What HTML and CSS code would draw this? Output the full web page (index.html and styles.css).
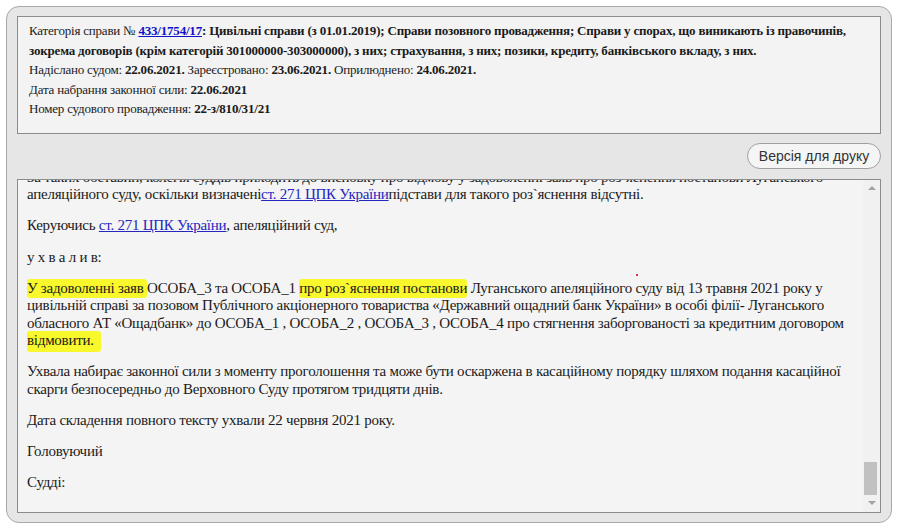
FILE: index.html
```html
<!DOCTYPE html>
<html lang="uk">
<head>
<meta charset="utf-8">
<title>Ухвала</title>
<link rel="stylesheet" href="styles.css">
</head>
<body>
<div class="frame">
  <div class="info">
    <div class="info-line">Категорія справи № <a class="case-link" href="#">433/1754/17</a><b>: Цивільні справи (з 01.01.2019); Справи позовного провадження; Справи у спорах, що виникають із правочинів, зокрема договорів (крім категорій 301000000-303000000), з них; страхування, з них; позики, кредиту, банківського вкладу, з них.</b></div>
    <div class="info-line">Надіслано судом: <b>22.06.2021.</b> Зареєстровано: <b>23.06.2021.</b> Оприлюднено: <b>24.06.2021.</b></div>
    <div class="info-line">Дата набрання законної сили: <b>22.06.2021</b></div>
    <div class="info-line">Номер судового провадження: <b>22-з/810/31/21</b></div>
  </div>
  <div class="toolbar">
    <button class="print-btn" type="button">Версія для друку</button>
  </div>
  <div class="doc-wrap">
    <div class="doc">
      <div class="doc-body">
        <p class="center">Справа № 433/1754/17</p>
        <p class="center">Провадження № 22-з/810/31/21</p>
        <p class="center"><b>ЛУГАНСЬКИЙ АПЕЛЯЦІЙНИЙ СУД</b></p>
        <p class="center"><b>УХВАЛА</b></p>
        <p class="center"><b>ІМЕНЕМ УКРАЇНИ</b></p>
        <p>22 червня 2021 року м. Сєвєродонецьк</p>
        <p>Луганський апеляційний суд у складі:</p>
        <p>головуючого судді - ОСОБА_5,</p>
        <p>суддів: ОСОБА_6, ОСОБА_7,</p>
        <p>розглянувши у порядку письмового провадження заяву ОСОБА_3 та ОСОБА_1 про роз`яснення постанови Луганського апеляційного суду від 13 травня 2021 року у цивільній справі за позовом Публічного акціонерного товариства «Державний ощадний банк України» в особі філії- Луганського обласного АТ «Ощадбанк» до ОСОБА_1 , ОСОБА_2 , ОСОБА_3 , ОСОБА_4 про стягнення заборгованості за кредитним договором,</p>
        <p class="center">в с т а н о в и в :</p>
        <p>Постановою Луганського апеляційного суду від 13 травня 2021 року апеляційну скаргу ОСОБА_1 задоволено частково. Рішення Лисичанського міського суду Луганської області від 21 грудня 2020 року змінено в частині розміру заборгованості, що підлягає стягненню, в іншій частині рішення суду залишено без змін.</p>
        <p>17 червня 2021 року до Луганського апеляційного суду надійшли заяви ОСОБА_3 та ОСОБА_1 про роз`яснення зазначеної постанови, в яких заявники просять роз`яснити порядок її виконання та розмір заборгованості, що підлягає стягненню з кожного з відповідачів.</p>
        <p>Відповідно до частини першої статті 271 ЦПК України за заявою учасників справи, державного виконавця, приватного виконавця суд роз`яснює судове рішення, яке набрало законної сили, не змінюючи змісту судового рішення.</p>
        <p>Подання заяви про роз`яснення судового рішення допускається, якщо воно ще не виконане або не закінчився строк, протягом якого рішення може бути пред`явлене до примусового виконання.</p>
        <p>Роз`яснення судового рішення - це викладення судового рішення у більш повній і зрозумілій формі. Роз`яснення рішення є способом усунення його недоліків, що полягають у неясності, незрозумілості або нечіткості рішення, що ускладнює його виконання.</p>
        <p>Суд не може під виглядом роз`яснення змінити зміст рішення, навіть частково, а повинен лише викласти більш повно і ясно ті його частини, розуміння яких викликає труднощі, не торкаючись тих питань, які не були предметом судового розгляду.</p>
        <p>Вивчивши зміст постанови Луганського апеляційного суду від 13 травня 2021 року, колегія суддів вважає, що постанова викладена чітко і зрозуміло, її резолютивна частина не містить неясностей, які б ускладнювали її виконання, а доводи заявників фактично зводяться до незгоди із встановленим судом розміром заборгованості.</p>
        <p>За таких обставин, колегія суддів приходить до висновку про відмову у задоволенні заяв про роз`яснення постанови Луганського апеляційного суду, оскільки визначені<a href="#">ст. 271 ЦПК України</a>підстави для такого роз`яснення відсутні.</p>
        <p>Керуючись <a href="#">ст. 271 ЦПК України</a>, апеляційний суд,</p>
        <p>у х в а л и в:</p>
        <p><mark class="hl">У задоволенні заяв </mark>ОСОБА_3 та ОСОБА_1 <mark class="hl">про роз`яснення постанови</mark> Луганського апеляційного суду від 13 травня 2021 року у цивільній справі за позовом Публічного акціонерного товариства «Державний ощадний банк України» в особі філії- Луганського обласного АТ «Ощадбанк» до ОСОБА_1 , ОСОБА_2 , ОСОБА_3 , ОСОБА_4 про стягнення заборгованості за кредитним договором <mark class="hl hl-end">відмовити.&nbsp;&nbsp;</mark></p>
        <p>Ухвала набирає законної сили з моменту проголошення та може бути оскаржена в касаційному порядку шляхом подання касаційної скарги безпосередньо до Верховного Суду протягом тридцяти днів.</p>
        <p>Дата складення повного тексту ухвали 22 червня 2021 року.</p>
        <p>Головуючий</p>
        <p>Судді:</p>
      </div>
    </div>
    <div class="scrollbar" aria-hidden="true">
      <div class="sb-btn"><span class="arrow-up"></span></div>
      <div class="sb-track"><div class="sb-thumb"></div></div>
      <div class="sb-btn"><span class="arrow-down"></span></div>
    </div>
    <span class="dot"></span>
  </div>
</div>
</body>
</html>
```
FILE: styles.css
```css
html, body {
  background: #ffffff;
}
body {
  margin: 6px;
  font-family: "Liberation Serif", "Times New Roman", serif;
  color: #1a1a1a;
}
.frame {
  background: #e6e6e6;
  border: 1px solid #a8a8a8;
  border-radius: 13px;
  padding: 9px 10px 9px 10px;
}
.info {
  background: #f3f3f3;
  border: 1px solid #8c8c8c;
  padding: 4px 11px 14px 11px;
  font-size: 13px;
  line-height: 19.5px;
  letter-spacing: -0.2px;
}
.case-link {
  color: #1010c8;
  font-weight: bold;
  text-decoration: underline;
}
.toolbar {
  display: flex;
  justify-content: flex-end;
  padding: 9px 0 10px 0;
}
.print-btn {
  font-family: "Liberation Sans", Arial, sans-serif;
  font-size: 14px;
  color: #333333;
  background: #f5f5f5;
  border: 1px solid #a0a0a0;
  border-radius: 13px;
  height: 26px;
  width: 134px;
  padding: 0;
  line-height: 24px;
}
.doc-wrap {
  position: relative;
}
.doc {
  background: #f4f4f4;
  border: 1px solid #8c8c8c;
  height: 332px;
  overflow: hidden;
  display: flex;
  flex-direction: column-reverse;
}
.doc-body {
  padding: 0 25px 6px 9px;
  font-size: 15px;
  line-height: 17.4px;
  letter-spacing: -0.25px;
}
.doc-body p {
  margin: 13.8px 0;
}
.doc-body .center {
  text-align: center;
}
.doc-body a {
  color: #2525c0;
  text-decoration: underline;
}
.hl {
  background: #f8f82c;
  color: inherit;
  border-radius: 3px;
  padding: 1px 0 2px 0;
}
.hl-end {
  padding-bottom: 4px;
}
.scrollbar {
  position: absolute;
  top: 1px;
  right: 1px;
  bottom: 1px;
  width: 17px;
  background: #f1f1f1;
  display: flex;
  flex-direction: column;
}
.sb-btn {
  height: 17px;
  display: flex;
  align-items: center;
  justify-content: center;
}
.arrow-up {
  width: 0;
  height: 0;
  border-left: 4px solid transparent;
  border-right: 4px solid transparent;
  border-bottom: 4px solid #a3a3a3;
}
.arrow-down {
  width: 0;
  height: 0;
  border-left: 4px solid transparent;
  border-right: 4px solid transparent;
  border-top: 4px solid #a3a3a3;
}
.sb-track {
  flex: 1;
  display: flex;
  flex-direction: column;
  justify-content: flex-end;
  padding: 0 3px 0 1px;
}
.sb-thumb {
  height: 33px;
  background: #c1c1c1;
}
.dot {
  position: absolute;
  left: 619px;
  top: 95px;
  width: 2px;
  height: 2px;
  background: #e0304a;
}
```
